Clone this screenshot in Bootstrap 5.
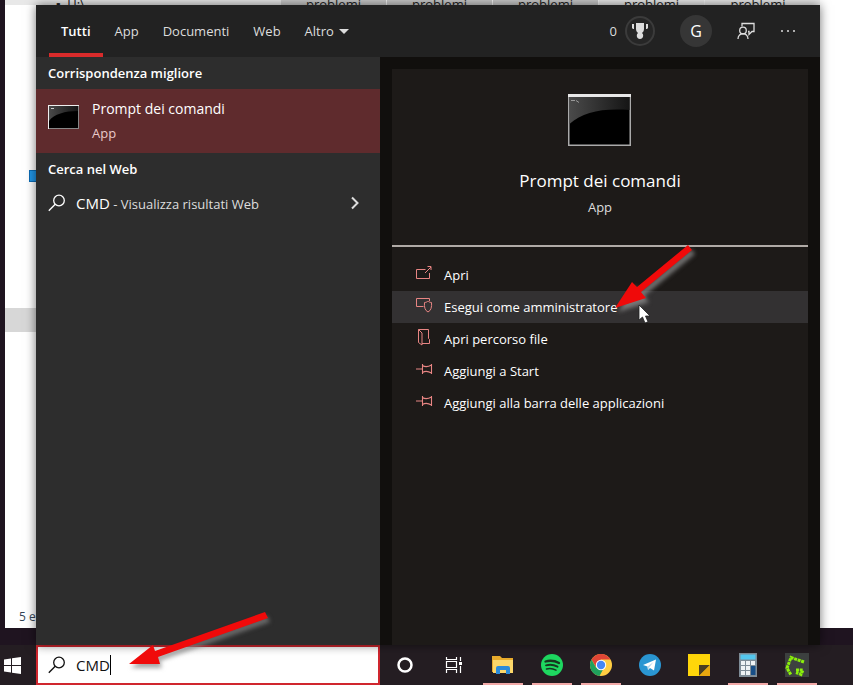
<!DOCTYPE html>
<html lang="it">
<head>
<meta charset="utf-8">
<meta name="viewport" content="width=device-width, initial-scale=1">
<title>Ricerca</title>
<link href="https://cdn.jsdelivr.net/npm/bootstrap@5.3.0/dist/css/bootstrap.min.css" rel="stylesheet">
<style>
body{font-family:"Open Sans","Noto Sans",sans-serif;font-size:13px;line-height:20px;background:#1f1420;color:#fff}
button{font:inherit;color:inherit;background:none;border:0;padding:0;text-align:left}
svg{flex:none;display:block}
.symbols{width:0;height:0}
.back-window{left:5px;right:0;top:0;bottom:17px;background:#fff;color:#222}
.tabstrip{height:5px;background:#e8e8e8;line-height:8px;margin-right:33px;padding-left:31px}
.strip-left{width:245px;padding-left:20px}
.strip-tab{width:106px;text-align:center;border-right:1px solid #f4f4f4}
.strip-tab.dim{background:#c9c9c9}
.side-band{top:308px;left:0;width:31px;height:24px;background:#d7d7d7}
.side-icon{top:170px;left:24px;width:8px;height:12px;background:#2196e8;border:1px solid #0b6cb5}
.window-status{left:14px;bottom:1px;font-size:12px;color:#345;white-space:nowrap}
.search-panel{left:36px;right:33px;top:5px;bottom:0;background:#2d2d2d;box-shadow:0 0 10px rgba(0,0,0,.55)}
.panel-head{height:52px;background:#222;padding:0 24px 0 13px}
.scope{height:52px;padding:0 12px;color:#ddd}
.scope.current{color:#fff;font-weight:600;border-bottom:4px solid #d92b2b;padding-top:3px}
.tools{gap:25px}
.points{gap:8px}
.avatar{width:32px;height:32px;border-radius:50%;background:#363636;font-size:16px}
.trophy{width:30px;height:30px;border-radius:50%;background:#262626;border:2px solid #3b3b3b}
.results{width:344px}
.group-title{font-size:13px;font-weight:600;line-height:32px;padding-left:12px;margin:0}
.best{height:64px;background:#5f2b2d;padding:0 12px;gap:12px}
.best-text{line-height:24px}
.best-name{font-size:14px}
.big-text{font-size:15px}
.soft{color:#ddd}
.pink{color:#e9c9ca}
.web-row{height:36px;padding:0 20px 0 12px;gap:10px}
.detail{background:#110f0d;padding:12px 12px 0;min-width:0}
.detail-card{background:#1d1a18}
.hero{height:178px;padding-top:24px;border-bottom:2px solid #b0aaa6}
.hero-name{font-size:17px;line-height:24px;font-weight:400;margin:22px 0 4px}
.actions{padding-top:12px}
.act{height:32px;padding-left:24px;gap:10px}
.act.hot{background:#333132}
.act svg{margin-top:-4px}
.taskbar{height:40px;background:#241d22}
.start{width:36px;padding-left:4px}
.search-box{width:344px;height:40px;background:#fff;border:2px solid #d0262e;padding-left:10px;gap:10px;color:#111}
.search-box input{border:0;outline:0;font-size:15px;padding:0;background:none;color:#111;width:34px}
.text-caret{width:1px;height:20px;background:#000;margin-left:-10px}
.task{width:49px;height:40px}
.task.open{background:linear-gradient(#f2a9a7,#f2a9a7) center bottom/40px 2px no-repeat}
.overlay{pointer-events:none;z-index:5}
.arrow-run{left:570px;top:234px;filter:drop-shadow(3px 4px 2px rgba(150,150,150,.7))}
.arrow-type{left:120px;bottom:10px;filter:drop-shadow(2px 4px 2px rgba(130,130,130,.7))}
.pointer{left:602px;top:299px}
</style>
</head>
<body>
<svg class="symbols position-absolute">
  <symbol id="lens" viewBox="0 0 18 18"><circle cx="11" cy="6.500" r="5.300" fill="none" stroke="currentColor" stroke-width="1.300"/><path d="M7.200 10.300 .8 16.700" stroke="currentColor" stroke-width="1.400"/></symbol>
  <symbol id="pin" viewBox="0 0 18 18"><path d="M0 9h6.500M6.500 4v10M6.500 5.500c3 2 5.500 1.500 9-.5v8c-3.500-2-6-2.500-9-.5M15.500 4v10" fill="none" stroke="#e88583" stroke-width="1.100"/></symbol>
  <linearGradient id="gloss" x1="0" y1="0" x2="1" y2="0"><stop stop-color="#4a4a4a"/><stop offset="1" stop-color="#151515"/></linearGradient>
</svg>
<div class="vh-100 d-flex flex-column overflow-hidden position-relative">
  <main class="flex-grow-1 position-relative">
    <div class="back-window position-absolute overflow-hidden">
      <div class="tabstrip d-flex">
        <div class="strip-left">▪ &nbsp;U:\</div>
        <div class="strip-tab dim">problemi</div>
        <div class="strip-tab dim">problemi</div>
        <div class="strip-tab dim">problemi</div>
        <div class="strip-tab">problemi</div>
        <div class="strip-tab border-0">problemi</div>
      </div>
      <div class="side-icon position-absolute"></div>
      <div class="side-band position-absolute"></div>
      <div class="window-status position-absolute">5 elementi</div>
    </div>

    <section class="search-panel position-absolute d-flex flex-column">
      <header class="panel-head d-flex align-items-center justify-content-between">
        <nav class="d-flex">
          <button class="scope current">Tutti</button>
          <button class="scope">App</button>
          <button class="scope">Documenti</button>
          <button class="scope">Web</button>
          <button class="scope d-flex align-items-center gap-1">Altro <svg width="12" height="7"><path d="M1 1h10L6 6z" fill="#ddd"/></svg></button>
        </nav>
        <div class="tools d-flex align-items-center">
          <div class="points d-flex align-items-center soft">0
            <button class="trophy d-flex align-items-center justify-content-center" aria-label="Premi">
              <svg width="18" height="18"><path d="M5 1h8v6c0 2-1 3-2 4 2 1.500 1.500 6-2 6s-4-4.500-2-6C6 10 5 9 5 7zM1 2h2v5H2L1 6zM15 2h2v4l-1 1h-1z" fill="#ddd"/></svg>
            </button>
          </div>
          <button class="avatar text-center" aria-label="Account">G</button>
          <button aria-label="Feedback"><svg width="18" height="18" fill="none" stroke="#ddd" stroke-width="1.300"><path d="M5 4.500V1.500h12v8h-2l-3 3V9.500h-1M1 17c0-7 10-7 10 0"/><circle cx="6" cy="8.500" r="3.300"/></svg></button>
          <button aria-label="Opzioni"><svg width="16" height="4" fill="#ddd"><circle cx="2" cy="2" r="1"/><circle cx="8" cy="2" r="1"/><circle cx="14" cy="2" r="1"/></svg></button>
        </div>
      </header>

      <div class="d-flex flex-grow-1">
        <div class="results flex-shrink-0">
          <h2 class="group-title">Corrispondenza migliore</h2>
          <button class="best d-flex align-items-center w-100">
            <svg class="align-self-start mt-3" width="32" height="24"><path d="M0 0h31v24H0z" fill="#888"/><path d="M0 0h31v1H1v23H0z" fill="#eee"/><path d="M1 1h29v22H1z" fill="#000"/><path d="M1 1h29v5C17 6 6 9 1 16z" fill="url(#gloss)"/><path d="M3 3.500h3" stroke="#ccc"/></svg>
            <span class="best-text"><span class="d-block best-name">Prompt dei comandi</span><span class="d-block pink">App</span></span>
          </button>
          <h2 class="group-title">Cerca nel Web</h2>
          <button class="web-row d-flex align-items-center w-100">
            <svg width="18" height="18"><use href="#lens"/></svg>
            <span class="flex-grow-1 soft"><span class="big-text text-white">CMD</span> - Visualizza risultati Web</span>
            <svg width="10" height="14"><path d="M2 1.500 7.500 7 2 12.500" fill="none" stroke="#ddd" stroke-width="2"/></svg>
          </button>
        </div>

        <div class="detail flex-grow-1 d-flex flex-column">
          <div class="detail-card flex-grow-1">
            <div class="hero d-flex flex-column align-items-center">
              <svg width="64" height="54"><path d="M0 1h63v52H0z" fill="#aaa"/><path d="M0 1h63v3H0z" fill="#e8e8e8"/><path d="M1.500 4h60v47.500h-60z" fill="#000"/><path d="M1.500 4h60v13C34 15 15 19 1.500 31z" fill="url(#gloss)"/><path d="M3 7.500h4m1 0 3 2" stroke="#999"/></svg>
              <h1 class="hero-name">Prompt dei comandi</h1>
              <div class="soft">App</div>
            </div>
            <div class="actions">
              <button class="act d-flex align-items-center w-100">
                <svg width="18" height="18" fill="none" stroke="#e88583"><path d="M9.500 5.500h-9v9h13V9M9 9l6-6M11.500 2.500H15V6"/></svg>Apri</button>
              <button class="act hot d-flex align-items-center w-100">
                <svg width="18" height="18" fill="none" stroke="#e88583"><path d="M7.500 10.500h-7v-8h13v2.500M8.500 6.500c2 0 3-1 3.500-1.500.5.500 1.500 1.500 3.500 1.500C16 11 15 14.500 12 16c-3-1.500-4-5-3.500-9.500z"/></svg>Esegui come amministratore</button>
              <button class="act d-flex align-items-center w-100">
                <svg width="18" height="18" fill="none" stroke="#e88583"><path d="M2.500 1.500h10v9l1 1v4H6M2.500 1.500v13L6 17V5z"/></svg>Apri percorso file</button>
              <button class="act d-flex align-items-center w-100"><svg width="18" height="18"><use href="#pin"/></svg>Aggiungi a Start</button>
              <button class="act d-flex align-items-center w-100"><svg width="18" height="18"><use href="#pin"/></svg>Aggiungi alla barra delle applicazioni</button>
            </div>
          </div>
        </div>
      </div>
      <svg class="overlay arrow-run position-absolute" width="100" height="80"><path d="M9 69 26 43 31 48 82 6 86 11 35 53 40 59z" fill="#f00a0a"/></svg>
      <svg class="overlay pointer position-absolute" width="14" height="20"><path d="M1 1v15l3.500-3 2.500 6 3-1.200L7.500 12H12z" fill="#fff" stroke="#222" stroke-width=".8"/></svg>
    </section>
  </main>

  <footer class="taskbar d-flex align-items-center flex-shrink-0">
    <button class="start" aria-label="Start"><svg width="17" height="17" fill="#fff"><path d="M0 2.500 7 1.500v6.500H0zM8 1.300 17 0v8H8zM0 9h7v6.500l-7-1zM8 9h9v8l-9-1.300z"/></svg></button>
    <label class="search-box d-flex align-items-center flex-shrink-0" for="query">
      <svg width="18" height="18"><use href="#lens"/></svg>
      <input id="query" type="text" value="CMD" aria-label="Cerca">
      <span class="text-caret"></span>
    </label>
    <button class="task d-flex align-items-center justify-content-center" aria-label="Cortana"><svg width="18" height="18"><circle cx="9" cy="9" r="6.500" fill="none" stroke="#fff" stroke-width="2.500"/></svg></button>
    <button class="task d-flex align-items-center justify-content-center" aria-label="Visualizzazione attività"><svg width="18" height="18" fill="none" stroke="#fff" stroke-width="1.200"><path d="M1.500 1v2.500h10V1M1.500 5.500v6h10v-6zM1.500 17v-3.500h10V17M15.500 1v4M15.500 10v7"/><path d="M14 6h3v3h-3z" fill="#fff" stroke="none"/></svg></button>
    <button class="task open d-flex align-items-center justify-content-center" aria-label="Esplora file"><svg width="24" height="20"><path d="M1 1h8l2 2h11v14H1z" fill="#e9ac2d"/><path d="M2 5h20v13H2z" fill="#fcd76a"/><path d="M5 19v-6q0-2 2-2h10q2 0 2 2v6h-4v-4H9v4z" fill="#2c8bd8"/></svg></button>
    <button class="task open d-flex align-items-center justify-content-center" aria-label="Spotify"><svg width="24" height="24" fill="none" stroke="#17351f" stroke-linecap="round"><circle cx="12" cy="12" r="11" fill="#1ed760" stroke="none"/><path d="M5.500 8.500q7-2 13.500 1.500" stroke-width="2.300"/><path d="M6 12.300q6-1.700 11.500 1.400" stroke-width="1.900"/><path d="M6.500 16q5-1.300 9.500 1.200" stroke-width="1.500"/></svg></button>
    <button class="task open d-flex align-items-center justify-content-center" aria-label="Chrome"><svg width="24" height="24"><circle cx="12" cy="12" r="11" fill="#ffcd42"/><path d="M2.500 6.500A11 11 0 0 1 21.500 6.500H12L7 14z" fill="#e04637"/><path d="M2.500 6.500 7 14.500l7 2L10.500 23A11 11 0 0 1 2.500 6.500z" fill="#1fa15d"/><circle cx="12" cy="12" r="5.200" fill="#fff"/><circle cx="12" cy="12" r="4.200" fill="#4587f4"/></svg></button>
    <button class="task d-flex align-items-center justify-content-center" aria-label="Telegram"><svg width="24" height="24"><circle cx="12" cy="12" r="11" fill="#2a96d2"/><path d="M5 12 18 6.500 16 17.500 12 15l-2 2-.5-3.500z" fill="#fff"/><path d="m9.500 13.500 6-4.500-4 5-1.500 3z" fill="#b8d8ec"/></svg></button>
    <button class="task d-flex align-items-center justify-content-center" aria-label="Note"><svg width="22" height="22"><path d="M0 0h22v22H0z" fill="#ffd60a"/><path d="M11 11h11L11 22z" fill="#4b3f21"/><path d="M22 11v11H11z" fill="#e8a80f"/></svg></button>
    <button class="task open d-flex align-items-center justify-content-center" aria-label="Calcolatrice"><svg width="18" height="24"><path d="M0 0h18v24H0z" fill="#7e8c97"/><path d="M1.500 1.500h15v5h-15z" fill="#55c8ef"/><path d="M2 8h4v4H2zM7 8h4v4H7zM12 8h4v4h-4zM2 13h4v4H2zM7 13h4v4H7zM2 18h4v4H2zM7 18h4v4H7z" fill="#eef2f5"/><path d="M12 13h4.500v9H12z" fill="#174e87"/></svg></button>
    <button class="task open d-flex align-items-center justify-content-center" aria-label="Greenshot"><svg width="24" height="24"><path d="M0 0h24v24H0z" fill="#3d4140"/><path d="M19 9 6 4.500 2 15l4 7M11 17h7l-2 4.500-5-2" fill="none" stroke="#8bf00b" stroke-width="3" stroke-dasharray="3 .7"/></svg></button>
  </footer>
  <svg class="overlay arrow-type position-absolute" width="160" height="70"><path d="M9 59 33 40 35 46 145 7 148 13 38 52 40 59z" fill="#f00a0a"/></svg>
</div>
<script src="https://cdn.jsdelivr.net/npm/bootstrap@5.3.0/dist/js/bootstrap.bundle.min.js"></script>
</body>
</html>
